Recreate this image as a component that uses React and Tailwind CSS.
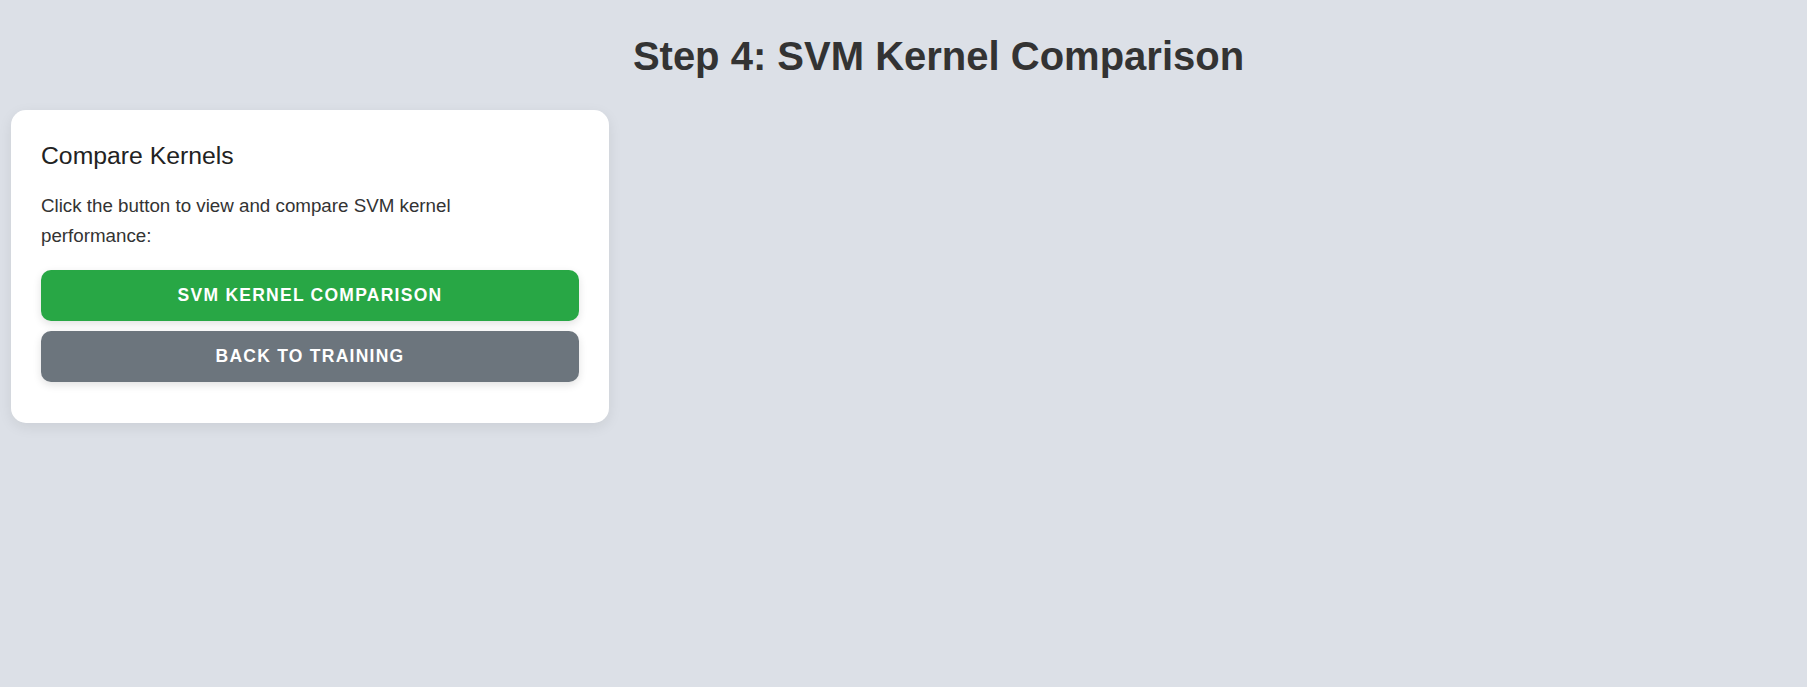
import React from "react";

export default function App() {
  const openComparison = () => {};
  const backToTraining = () => {};

  return (
    <div className="min-h-screen w-full bg-[#dce0e7] font-['Liberation_Sans',Arial,sans-serif] text-[#333]">
      {/* Page title */}
      <div className="pl-[70px] pt-[33px]">
        <h1 className="text-center text-[40px] font-bold leading-[46px] text-[#333]">
          Step 4: SVM Kernel Comparison
        </h1>
      </div>

      {/* Kernel card */}
      <div className="ml-[11px] mt-[31px] w-[598px] rounded-[15px] bg-white px-[30px] pt-[30px] pb-[41px] shadow-[0_4px_14px_rgba(0,0,0,0.08)]">
        <h3 className="text-[24.75px] font-normal leading-[31px] text-[#222]">
          Compare Kernels
        </h3>
        <p className="mt-[19.5px] max-w-[470px] text-[18.75px] leading-[30px] text-[#333]">
          Click the button to view and compare SVM kernel performance:
        </p>
        <div className="mt-[19.5px] flex flex-col gap-[10px]">
          <button
            onClick={openComparison}
            className="h-[51px] w-full rounded-[10px] bg-[#28a745] text-[17.5px] font-bold uppercase tracking-[1.25px] text-white shadow-[0_3px_8px_rgba(0,0,0,0.12)]"
          >
            SVM Kernel Comparison
          </button>
          <button
            onClick={backToTraining}
            className="h-[51px] w-full rounded-[10px] bg-[#6c757d] text-[17.5px] font-bold uppercase tracking-[1.25px] text-white shadow-[0_3px_8px_rgba(0,0,0,0.12)]"
          >
            Back to Training
          </button>
        </div>
      </div>
    </div>
  );
}
